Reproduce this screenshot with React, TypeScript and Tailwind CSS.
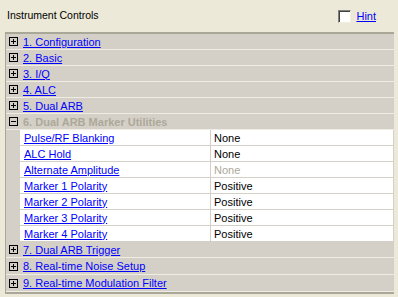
import React from 'react';

const sectionsTop = ['1. Configuration', '2. Basic', '3. I/Q', '4. ALC', '5. Dual ARB'];

const params = [
  { label: 'Pulse/RF Blanking', value: 'None' },
  { label: 'ALC Hold', value: 'None' },
  { label: 'Alternate Amplitude', value: 'None', disabled: true },
  { label: 'Marker 1 Polarity', value: 'Positive' },
  { label: 'Marker 2 Polarity', value: 'Positive' },
  { label: 'Marker 3 Polarity', value: 'Positive' },
  { label: 'Marker 4 Polarity', value: 'Positive' },
];

const sectionsBottom = [
  { label: '7. Dual ARB Trigger', h: 'h-[16px]' },
  { label: '8. Real-time Noise Setup', h: 'h-[17px]' },
  { label: '9. Real-time Modulation Filter', h: 'h-[17px]' },
];

function ToggleBox({ open }: { open?: boolean }) {
  return (
    <svg width="9" height="9" viewBox="0 0 9 9" className="shrink-0">
      <rect x="0.5" y="0.5" width="8" height="8" fill="none" stroke="#000" />
      <path d="M2 4.5H7" stroke="#000" />
      {!open && <path d="M4.5 2V7" stroke="#000" />}
    </svg>
  );
}

function SectionRow({ label, h = 'h-[16px]' }: { label: string; h?: string }) {
  return (
    <div className={`${h} flex items-center border-b border-[#EEECE3] pl-[3px] gap-[5px]`}>
      <ToggleBox />
      <a href="#" className="text-[#0000FF] underline leading-[14px]">
        {label}
      </a>
    </div>
  );
}

export default function App() {
  return (
    <div className="w-[398px] h-[297px] overflow-hidden bg-[#ECE9D8] text-[11px] text-black font-['Liberation_Sans',Arial,sans-serif]">
      <div className="h-[32px] flex items-start justify-between pl-[7px] pr-[22px] pt-[8px]">
        <span className="leading-[14px] text-[10.5px]">Instrument Controls</span>
        <div className="flex items-center gap-[5px] mt-[1px]">
          <span className="w-[13px] h-[13px] bg-white border border-t-[#808080] border-l-[#808080] border-r-[#F1EFE2] border-b-[#F1EFE2] shadow-[inset_1px_1px_0_#404040]" />
          <a href="#" className="text-[#0000FF] underline leading-[14px]">
            Hint
          </a>
        </div>
      </div>

      <div className="ml-[5px] w-[389px] bg-[#D4D0C8] border-l border-t-2 border-b-2 border-[#A9A797]">
        {sectionsTop.map((s) => (
          <SectionRow key={s} label={s} />
        ))}

        <div className="h-[16px] flex items-center border-b border-[#EEECE3] pl-[3px] gap-[5px]">
          <ToggleBox open />
          <span className="font-bold text-[#ACA899] leading-[14px]">6. Dual ARB Marker Utilities</span>
        </div>

        <div className="ml-[14px] w-[373px] bg-white">
          {params.map((p) => (
            <div key={p.label} className="h-[16px] flex border-b border-[#D4D0C8]">
              <div className="w-[191px] border-r border-[#D4D0C8] pl-[4px] flex items-center">
                <a href="#" className="text-[#0000FF] underline leading-[14px]">
                  {p.label}
                </a>
              </div>
              <div className={`pl-[3px] flex items-center leading-[14px] ${p.disabled ? 'text-[#ACA899]' : 'text-black'}`}>
                {p.value}
              </div>
            </div>
          ))}
        </div>

        {sectionsBottom.map((s) => (
          <SectionRow key={s.label} label={s.label} h={s.h} />
        ))}
      </div>
    </div>
  );
}
